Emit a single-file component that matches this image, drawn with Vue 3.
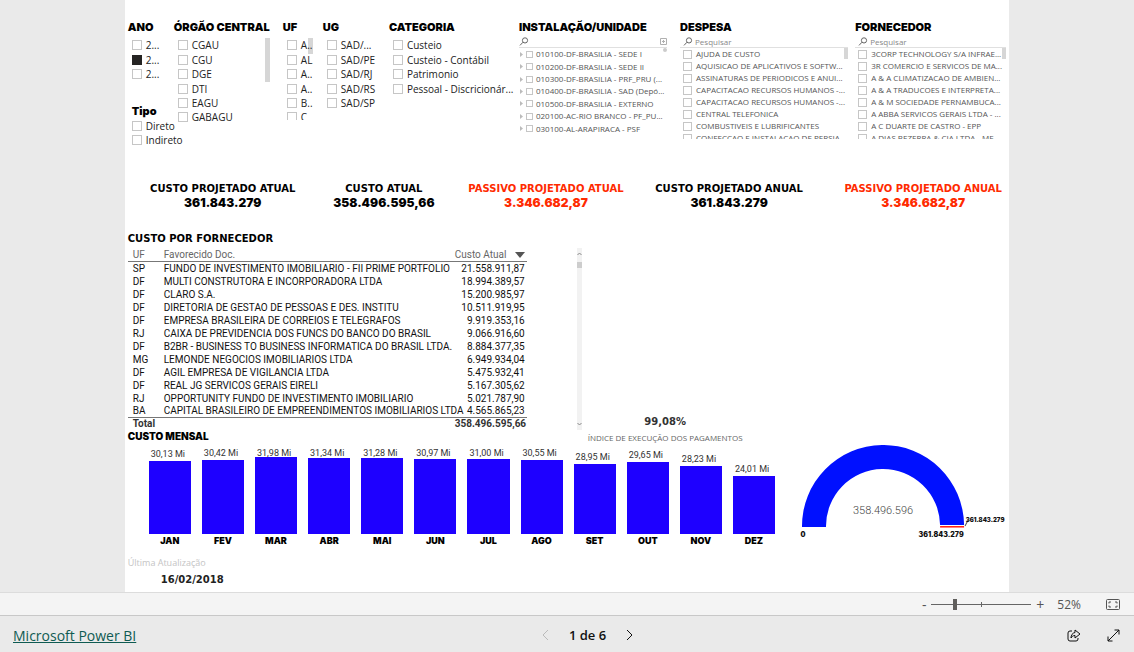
<script setup>
import { ref } from 'vue'

const slicers = [
  { title: 'ANO', cls: 'ano', rows: ['2...', '2...', '2...'], checked: 1 },
  { title: 'ÓRGÃO CENTRAL', cls: 'orgao', rows: ['CGAU', 'CGU', 'DGE', 'DTI', 'EAGU', 'GABAGU'], bar: true },
  { title: 'UF', cls: 'uf', rows: ['A..', 'AL', 'A..', 'A..', 'B..', 'C'], bar: true },
  { title: 'UG', cls: 'ug', rows: ['SAD/...', 'SAD/PE', 'SAD/RJ', 'SAD/RS', 'SAD/SP'] },
  { title: 'CATEGORIA', cls: 'categoria', rows: ['Custeio', 'Custeio - Contábil', 'Patrimonio', 'Pessoal - Discricionár...'] },
]
const units = [
  '010100-DF-BRASILIA - SEDE I',
  '010200-DF-BRASILIA - SEDE II',
  '010300-DF-BRASILIA - PRF_PRU (...',
  '010400-DF-BRASILIA - SAD (Depó...',
  '010500-DF-BRASILIA - EXTERNO',
  '020100-AC-RIO BRANCO - PF_PU...',
  '030100-AL-ARAPIRACA - PSF',
]
const searchLists = [
  {
    title: 'DESPESA', cls: 'despesa',
    rows: ['AJUDA DE CUSTO', 'AQUISICAO DE APLICATIVOS E SOFTW...', 'ASSINATURAS DE PERIODICOS E ANUI...', 'CAPACITACAO RECURSOS HUMANOS -...', 'CAPACITACAO RECURSOS HUMANOS -...', 'CENTRAL TELEFONICA', 'COMBUSTIVEIS E LUBRIFICANTES', 'CONFECCAO E INSTALACAO DE PERSIA'],
  },
  {
    title: 'FORNECEDOR', cls: 'fornecedor',
    rows: ['3CORP TECHNOLOGY S/A INFRAE...', '3R COMERCIO E SERVICOS DE MA...', 'A & A CLIMATIZACAO DE AMBIEN...', 'A & A TRADUCOES E INTERPRETA...', 'A & M SOCIEDADE PERNAMBUCA...', 'A ABBA SERVICOS GERAIS LTDA - ...', 'A C DUARTE DE CASTRO - EPP', 'A DIAS BEZERRA & CIA LTDA - ME'],
  },
]
const kpis = [
  { label: 'CUSTO PROJETADO ATUAL', value: '361.843.279' },
  { label: 'CUSTO ATUAL', value: '358.496.595,66' },
  { label: 'PASSIVO PROJETADO ATUAL', value: '3.346.682,87', alert: true },
  { label: 'CUSTO PROJETADO ANUAL', value: '361.843.279' },
  { label: 'PASSIVO PROJETADO ANUAL', value: '3.346.682,87', alert: true },
]
const suppliers = [
  ['SP', 'FUNDO DE INVESTIMENTO IMOBILIARIO - FII PRIME PORTFOLIO', '21.558.911,87'],
  ['DF', 'MULTI CONSTRUTORA E INCORPORADORA LTDA', '18.994.389,57'],
  ['DF', 'CLARO S.A.', '15.200.985,97'],
  ['DF', 'DIRETORIA DE GESTAO DE PESSOAS E DES. INSTITU', '10.511.919,95'],
  ['DF', 'EMPRESA BRASILEIRA DE CORREIOS E TELEGRAFOS', '9.919.353,16'],
  ['RJ', 'CAIXA DE PREVIDENCIA DOS FUNCS DO BANCO DO BRASIL', '9.066.916,60'],
  ['DF', 'B2BR - BUSINESS TO BUSINESS INFORMATICA DO BRASIL LTDA.', '8.884.377,35'],
  ['MG', 'LEMONDE NEGOCIOS IMOBILIARIOS LTDA', '6.949.934,04'],
  ['DF', 'AGIL EMPRESA DE VIGILANCIA LTDA', '5.475.932,41'],
  ['DF', 'REAL JG SERVICOS GERAIS EIRELI', '5.167.305,62'],
  ['RJ', 'OPPORTUNITY FUNDO DE INVESTIMENTO IMOBILIARIO', '5.021.787,90'],
  ['BA', 'CAPITAL BRASILEIRO DE EMPREENDIMENTOS IMOBILIARIOS LTDA', '4.565.865,23'],
]
const months = [
  ['JAN', 30.13], ['FEV', 30.42], ['MAR', 31.98], ['ABR', 31.34], ['MAI', 31.28], ['JUN', 30.97],
  ['JUL', 31.0], ['AGO', 30.55], ['SET', 28.95], ['OUT', 29.65], ['NOV', 28.23], ['DEZ', 24.01],
].map(([name, value]) => {
  const height = Math.round(value * 2.42)
  return { name, height, labelBottom: Math.min(height + 1, 75), text: value.toFixed(2).replace('.', ',') + ' Mi' }
})
const zoom = ref(23)
</script>

<template>
  <div class="page">
    <main class="canvas">
      <div class="report">
        <section class="filters">
          <div v-for="s in slicers" :key="s.title" class="slicer" :class="s.cls">
            <h2>{{ s.title }}</h2>
            <div class="list">
              <label v-for="(r, i) in s.rows" :key="i" class="item">
                <input type="checkbox" :checked="s.checked === i"><span>{{ r }}</span>
              </label>
              <i v-if="s.bar" class="thumb"></i>
            </div>
            <div v-if="s.cls === 'ano'" class="tipo">
              <h2>Tipo</h2>
              <label class="item"><input type="checkbox"><span>Direto</span></label>
              <label class="item"><input type="checkbox"><span>Indireto</span></label>
            </div>
          </div>

          <div class="slicer instalacao">
            <h2>INSTALAÇÃO/UNIDADE</h2>
            <div class="search">
              <svg width="10" height="9" viewBox="0 0 10 9"><circle cx="6" cy="3.4" r="2.6" /><path d="M4 5.2 1 8.4" /></svg>
              <input type="search" aria-label="Pesquisar instalação">
              <button class="clear" aria-label="Limpar"><svg width="7" height="7" viewBox="0 0 7 7"><path d="M.5.5h6v6h-6zM2 3.5h3M3.500 2v3" /></svg></button>
            </div>
            <div class="tree">
              <label v-for="u in units" :key="u" class="item">
                <svg width="3" height="5" viewBox="0 0 3 5"><path d="M0 0 3 2.500 0 5z" /></svg>
                <input type="checkbox"><span>{{ u }}</span>
              </label>
              <i class="dot"></i>
            </div>
          </div>

          <div v-for="s in searchLists" :key="s.title" class="slicer" :class="s.cls">
            <h2>{{ s.title }}</h2>
            <div class="search">
              <svg width="10" height="9" viewBox="0 0 10 9"><circle cx="6" cy="3.4" r="2.6" /><path d="M4 5.2 1 8.4" /></svg>
              <input type="search" placeholder="Pesquisar" :aria-label="'Pesquisar ' + s.title">
            </div>
            <div class="dense">
              <label v-for="(r, i) in s.rows" :key="i" class="item"><input type="checkbox"><span>{{ r }}</span></label>
              <i class="thumb"></i>
            </div>
          </div>
        </section>

        <section class="kpis">
          <div v-for="k in kpis" :key="k.label" class="kpi" :class="{ alert: k.alert }">
            <span class="kpi-label">{{ k.label }}</span>
            <strong>{{ k.value }}</strong>
          </div>
        </section>

        <section class="middle">
          <div class="suppliers">
            <h2 class="wide">CUSTO POR FORNECEDOR</h2>
            <div class="table-wrap">
              <table>
                <thead>
                  <tr>
                    <th class="c-uf">UF</th>
                    <th>Favorecido Doc.</th>
                    <th class="c-num"><span>Custo Atual</span><svg width="10" height="6" viewBox="0 0 10 6"><path d="M0 0h10L5 6z" fill="#555" /></svg></th>
                  </tr>
                </thead>
                <tbody>
                  <tr v-for="row in suppliers" :key="row[1]"><td>{{ row[0] }}</td><td>{{ row[1] }}</td><td class="num">{{ row[2] }}</td></tr>
                </tbody>
                <tfoot>
                  <tr><td colspan="2">Total</td><td class="num">358.496.595,66</td></tr>
                </tfoot>
              </table>
              <div class="scroll">
                <svg width="5" height="4" viewBox="0 0 5 4"><path d="M.5 3 2.500 1l2 2" /></svg>
                <i></i>
                <svg width="5" height="4" viewBox="0 0 5 4"><path d="M.5 1 2.500 3l2-2" /></svg>
              </div>
            </div>
          </div>
          <div class="index">
            <strong>99,08%</strong>
            <span>ÍNDICE DE EXECUÇÃO DOS PAGAMENTOS</span>
          </div>
        </section>

        <section class="charts">
          <div class="monthly">
            <h2 class="small">CUSTO MENSAL</h2>
            <div class="bars">
              <div v-for="m in months" :key="m.name" class="month">
                <div class="plot">
                  <div class="bar" :style="{ height: m.height + 'px' }"></div>
                  <span class="bar-label" :style="{ marginBottom: m.labelBottom + 'px' }">{{ m.text }}</span>
                </div>
                <b>{{ m.name }}</b>
              </div>
            </div>
          </div>
          <svg class="gauge" viewBox="0 0 214 102" role="img" aria-label="Custo atual">
            <path d="M7 82a81 81 0 0 1 162-2h-24A57 57 0 0 0 31 82z" fill="#0010ff" />
            <rect x="145" y="81" width="24" height="1.500" fill="#ff1a10" />
            <path d="M170 81l3-6" stroke="#555" fill="none" />
            <text x="88" y="69" class="g-value">358.496.596</text>
            <text x="8" y="92" class="g-edge">0</text>
            <text x="146" y="92" class="g-edge">361.843.279</text>
            <text x="190" y="77" class="g-target">361.843.279</text>
          </svg>
        </section>

        <section class="updated">
          <span>Última Atualização</span>
          <strong>16/02/2018</strong>
        </section>
      </div>
    </main>

    <div class="zoombar">
      <button aria-label="Reduzir">-</button>
      <div class="range"><input v-model="zoom" type="range" min="0" max="100" aria-label="Zoom"></div>
      <button aria-label="Ampliar">+</button>
      <span class="percent">52%</span>
      <button class="fit" aria-label="Ajustar à página">
        <svg width="14" height="11" viewBox="0 0 14 11"><rect x=".5" y=".5" width="13" height="10" rx="1" /><path d="M5 3H3v1.500M3 6.500V8h2M9 3h2v1.500M11 6.500V8H9" /></svg>
      </button>
    </div>

    <footer class="nav">
      <a href="#">Microsoft Power BI</a>
      <div class="pager">
        <button class="off" aria-label="Página anterior"><svg width="7" height="12" viewBox="0 0 7 12"><path d="M6 1 1 6l5 5" /></svg></button>
        <span>1 de 6</span>
        <button aria-label="Próxima página"><svg width="7" height="12" viewBox="0 0 7 12"><path d="m1 1 5 5-5 5" /></svg></button>
      </div>
      <div class="actions">
        <button aria-label="Compartilhar"><svg width="14" height="13" viewBox="0 0 14 13"><path d="M5 2H3a2 2 0 0 0-2 2v6a2 2 0 0 0 2 2h6a2 2 0 0 0 2-2V9" /><path d="M8 1l5 4-5 4V6.500C6 6.500 5 7.500 4 9c0-3 1.500-5 4-5.500z" /></svg></button>
        <button aria-label="Tela inteira"><svg width="13" height="13" viewBox="0 0 13 13"><path d="M1 12 12 1M7.500 1H12v4.500M1 7.500V12h4.500" /></svg></button>
      </div>
    </footer>
  </div>
</template>

<style>
body { margin: 0; }
</style>

<style scoped>
.page { min-height: 100vh; display: flex; flex-direction: column; background: #eaeaea; font-family: "Open Sans", "Noto Sans", sans-serif; font-size: 10px; color: #222; }
* { box-sizing: border-box; }
button { border: 0; padding: 0; background: none; font: inherit; color: inherit; display: flex; align-items: center; justify-content: center; }
svg { fill: none; stroke: none; flex: none; }
h2 { margin: 0; font: 900 11px/14px Inter, "Liberation Sans", sans-serif; color: #000; white-space: nowrap; }
h2.wide { font: 700 10px/14px "DejaVu Sans", sans-serif; }
h2.small { font-size: 10px; line-height: 12px; }
.canvas { flex: 1; display: flex; justify-content: center; }
.report { width: 78%; background: #fff; padding: 20px 0 0 3px; }

.filters { display: grid; grid-template-columns: 46fr 109fr 40fr 66fr 130fr 161fr 175fr 154fr; height: 148px; }
.slicer { min-width: 0; }
.list { position: relative; display: grid; grid-template-rows: 14px 15px 14px 15px 14px 14px; margin-top: 4px; padding-left: 4px; }
.ano .list { grid-template-rows: 14px 15px 14px; }
.orgao .list { margin-right: 13px; }
.uf .list { margin-right: 10px; height: 82px; overflow: hidden; }
.categoria .list { margin-right: 6px; }
.item { display: flex; align-items: center; gap: 4px; line-height: 14px; white-space: nowrap; color: #222; }
.item input { appearance: none; flex: none; width: 10px; height: 10px; margin: 0; border: 1px solid #c6c6c6; background: #fff; }
.item input:checked { background: #252423; border-color: #252423; }
.thumb { position: absolute; top: 0; right: 0; width: 5px; height: 44px; background: #d6d6d6; }
.uf .thumb { height: 16px; }
.uf .item { position: relative; z-index: 1; }
.tipo { margin: 23px 0 0 4px; }
.tipo .item { height: 14px; }
.tipo h2 { height: 15px; }

.search { display: flex; align-items: center; height: 12px; margin-top: 2px; border-bottom: 1px solid #e0e0e0; padding-left: 3px; }
.search svg { stroke: #666; }
.search input { flex: 1; min-width: 0; border: 0; outline: 0; padding: 0 0 0 2px; background: none; font: 8px/11px "Open Sans", sans-serif; color: #777; }
.search input::placeholder { color: #888; opacity: 1; }
.search .clear svg { stroke: #b0b0b0; }
.instalacao .search { margin-right: 13px; padding-left: 0; }
.despesa .search, .despesa .dense { margin-right: 7px; }
.fornecedor .search, .fornecedor .dense { margin-right: 3px; }
.tree { position: relative; display: grid; grid-auto-rows: 1fr; height: 87px; margin-right: 13px; padding-left: 1px; }
.tree .item, .dense .item { font-size: 8px; line-height: 12px; color: #555; }
.tree .item { gap: 3px; }
.tree .item input { width: 7px; height: 7px; }
.tree .item svg { fill: #bbb; }
.dot { position: absolute; right: 0; top: 0; width: 4px; height: 4px; border-radius: 2px; background: #ccc; }
.dense { position: relative; height: 91px; padding-left: 3px; overflow: hidden; }
.dense .item { height: 12px; }
.dense .item input { width: 9px; height: 9px; }
.dense .thumb { height: 11px; width: 4px; }

.kpis { display: grid; grid-template-columns: 148fr 174fr 150fr 216fr 172fr; padding-left: 21px; margin-top: 14px; }
.kpi { display: flex; flex-direction: column; align-items: center; min-width: 0; white-space: nowrap; color: #000; line-height: 14px; }
.kpi-label { font: 700 10px/14px "DejaVu Sans", sans-serif; }
.kpi strong { font: 900 12px/14px Inter, sans-serif; }
.kpi.alert { color: #ff2a00; }

.middle { display: flex; margin-top: 22px; }
.suppliers { width: 51.5%; }
.table-wrap { display: flex; justify-content: space-between; margin-top: 2px; }
table { width: 399px; table-layout: fixed; border-collapse: collapse; color: #111; line-height: 13px; font-family: Roboto, "Open Sans", sans-serif; }
th, td { padding: 0 0 0 5px; height: 13px; text-align: left; font-weight: 400; white-space: nowrap; }
th { color: #666; }
thead tr { border-bottom: 1px solid #777; }
tbody tr:last-child td { height: 12px; line-height: 12px; }
tfoot tr { border-top: 1px solid #777; }
tfoot td { font-weight: 700; color: #333; height: 12px; line-height: 12px; }
.c-uf { width: 31px; }
.c-num { width: 77px; }
.c-num span { margin-right: 9px; }
.num { text-align: right; padding-right: 2px; }
.scroll { width: 5px; background: #f2f2f2; display: flex; flex-direction: column; align-items: center; padding: 4px 0; }
.scroll svg { stroke: #888; }
.scroll i { width: 5px; height: 6px; margin: 6px 0 auto; background: #cdcdcd; }
.index { display: flex; flex-direction: column; align-items: center; justify-content: flex-end; margin-left: 6px; white-space: nowrap; line-height: 16px; margin-bottom: -16px; font-size: 8px; color: #666; }
.index strong { font: 700 10px/16px "DejaVu Sans", sans-serif; color: #333; }

.charts { display: flex; justify-content: space-between; align-items: flex-end; }
.monthly { flex: 647 1 0; }
.bars { display: flex; gap: 11px; padding-left: 21px; margin-top: 5px; }
.month { flex: 1; min-width: 0; text-align: center; }
.month b { display: block; color: #000; font: 900 9px/14px Inter, sans-serif; }
.plot { display: grid; height: 87px; }
.plot > * { grid-area: 1 / 1; align-self: end; }
.bar { background: #1e00ff; }
.bar-label { font: 9px/12px Roboto, sans-serif; color: #333; text-align: left; padding-left: 2px; white-space: nowrap; }
.gauge { flex: 214 1 0; min-width: 0; margin: 0 0 1px 20px; }
.gauge text { text-anchor: middle; fill: #111; font-family: Inter, sans-serif; }
.gauge .g-value { font: 300 11px Roboto, sans-serif; fill: #444; }
.gauge .g-edge { font-weight: 900; font-size: 7px; }
.gauge .g-target { font-weight: 900; font-size: 6px; }

.updated { display: flex; flex-direction: column; align-items: flex-start; margin-top: 7px; line-height: 16px; font-size: 9px; color: #c4c4c4; }
.updated strong { font: 700 10px/18px "DejaVu Sans", sans-serif; color: #222; margin-left: 33px; }

.zoombar { height: 24px; display: flex; align-items: center; justify-content: flex-end; padding-right: 14px; border-top: 1px solid #dcdcdc; border-bottom: 1px solid #c8c8c8; background: #f4f4f4; font-size: 12px; color: #555; }
.zoombar button { width: 14px; height: 20px; font-size: 14px; }
.range { position: relative; width: 100px; margin-right: 2px; display: flex; align-items: center; background: linear-gradient(#666, #666) center / 100% 1px no-repeat, linear-gradient(#666, #666) center / 1px 5px no-repeat; }
.range input { appearance: none; width: 100%; height: 12px; margin: 0; background: none; }
.range input::-webkit-slider-thumb { appearance: none; width: 4px; height: 11px; background: #605e5c; }
.percent { margin: 0 25px 0 10px; }
.fit svg { stroke: #555; }

.nav { height: 36px; display: grid; grid-template-columns: 1fr auto 1fr; align-items: center; padding: 2px 14px 0 13px; font-size: 13px; }
.nav svg { stroke: #111; }
.nav a { color: #0f5b52; font-size: 14px; }
.pager { display: flex; align-items: center; gap: 20px; font-weight: 600; color: #111; margin-left: 42px; }
.nav .off svg { stroke: #bbb; }
.actions { display: flex; justify-content: flex-end; gap: 26px; }
</style>
